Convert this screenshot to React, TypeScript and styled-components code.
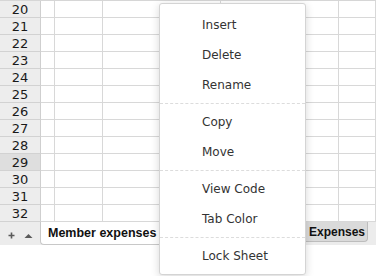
import React from "react";
import styled, { createGlobalStyle } from "styled-components";

const Global = createGlobalStyle`
  html, body { margin: 0; padding: 0; background: #fff; overflow: hidden; }
  body { font-family: "DejaVu Sans", "Liberation Sans", sans-serif; }
`;

const Screen = styled.div`
  position: relative;
  width: 376px;
  height: 276px;
  overflow: hidden;
  background: #fff;
`;

const Grid = styled.div`
  display: grid;
  grid-template-columns: 41px 14px 48px 118px 118px 1fr;
  grid-auto-rows: 17px;
  border-top: 1px solid #d6d6d6;
`;

const RowHead = styled.div<{ $active?: boolean }>`
  background: ${(p) => (p.$active ? "#dedede" : "#ededed")};
  border-right: 1px solid #cfcfcf;
  border-bottom: 1px solid #d2d2d2;
  display: flex;
  align-items: center;
  justify-content: center;
  font-size: 13px;
  color: #1a1a1a;
  padding-top: 1px;
  box-sizing: border-box;
`;

const Cell = styled.div`
  border-right: 1px solid #d8d8d8;
  border-bottom: 1px solid #d8d8d8;
  box-sizing: border-box;
`;

const TabBar = styled.div`
  display: flex;
  align-items: flex-start;
  height: 23px;
  background: #ececec;
  padding-right: 8px;
`;

const Controls = styled.div`
  width: 40px;
  height: 23px;
  display: flex;
  align-items: center;
  justify-content: flex-start;
  gap: 9px;
  padding-left: 8px;
  box-sizing: border-box;
  padding-top: 4px;
`;

const ActiveTab = styled.div`
  height: 23px;
  background: #fff;
  border-left: 1px solid #c8c8c8;
  border-bottom: 1px solid #c8c8c8;
  border-bottom-left-radius: 4px;
  box-sizing: border-box;
  padding: 0 10px 0 7px;
  display: flex;
  align-items: center;
  font-family: "Liberation Sans", sans-serif;
  font-weight: bold;
  font-size: 12.5px;
  color: #111;
`;

const Tab = styled.div`
  margin-left: auto;
  height: 20px;
  background: #dadada;
  border-right: 1px solid #bdbdbd;
  border-bottom: 1px solid #bdbdbd;
  border-bottom-right-radius: 4px;
  box-sizing: border-box;
  padding: 0 2px 0 10px;
  display: flex;
  align-items: center;
  font-family: "Liberation Sans", sans-serif;
  font-weight: bold;
  font-size: 12px;
  color: #111;
  white-space: nowrap;
`;

const Menu = styled.div`
  position: absolute;
  left: 159px;
  top: 3px;
  width: 147px;
  height: 272px;
  box-sizing: border-box;
  background: #fff;
  border: 1px solid #d4d4d4;
  border-radius: 3px;
  box-shadow: 0 2px 9px rgba(0, 0, 0, 0.16);
  padding: 6px 0 3px;
  display: flex;
  flex-direction: column;
`;

const Item = styled.div`
  height: 30px;
  flex: none;
  display: flex;
  align-items: center;
  padding-left: 42px;
  font-size: 12px;
  color: #333;
`;

const Sep = styled.div`
  height: 7px;
  flex: none;
  display: flex;
  align-items: center;
  &::after {
    content: "";
    flex: 1;
    border-top: 1px dashed #dcdcdc;
  }
`;

const rows = [20, 21, 22, 23, 24, 25, 26, 27, 28, 29, 30, 31, 32];

export default function App() {
  return (
    <Screen>
      <Global />
      <Grid>
        {rows.map((r) => (
          <React.Fragment key={r}>
            <RowHead $active={r === 29}>{r}</RowHead>
            <Cell />
            <Cell />
            <Cell />
            <Cell />
            <Cell />
          </React.Fragment>
        ))}
      </Grid>
      <TabBar>
        <Controls>
          <svg width="7" height="7" viewBox="0 0 7 7">
            <path d="M3.5 0.5v6M0.5 3.5h6" stroke="#5a5a5a" strokeWidth="1.6" />
          </svg>
          <svg width="9" height="6" viewBox="0 0 9 6">
            <path d="M4.5 1L8.5 5H0.5Z" fill="#5a5a5a" />
          </svg>
        </Controls>
        <ActiveTab>Member expenses</ActiveTab>
        <Tab>Total Expenses</Tab>
      </TabBar>
      <Menu>
        <Item>Insert</Item>
        <Item>Delete</Item>
        <Item>Rename</Item>
        <Sep />
        <Item>Copy</Item>
        <Item>Move</Item>
        <Sep />
        <Item>View Code</Item>
        <Item>Tab Color</Item>
        <Sep />
        <Item>Lock Sheet</Item>
      </Menu>
    </Screen>
  );
}
